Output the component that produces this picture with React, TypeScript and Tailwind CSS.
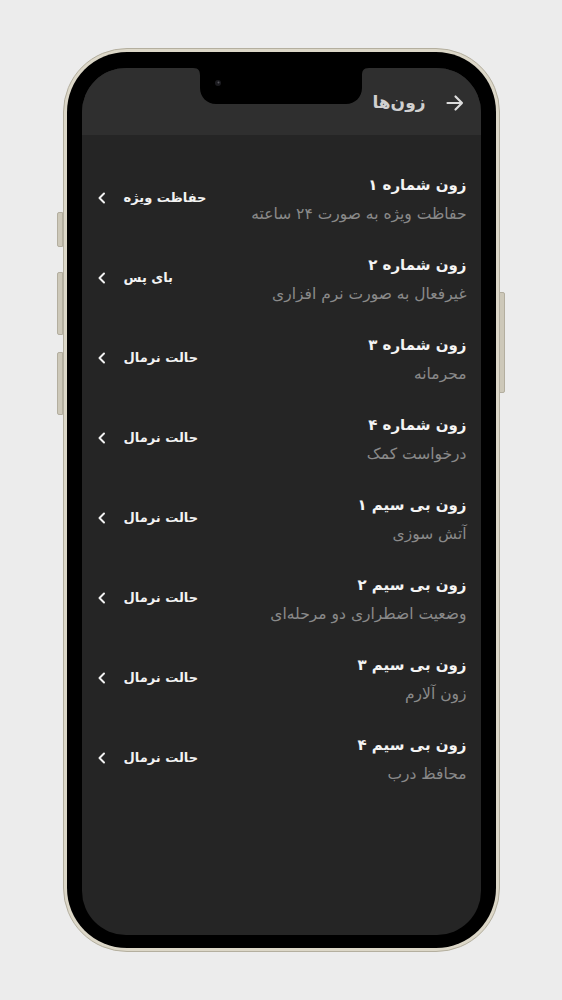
import React from 'react';

const zones = [
  { title: 'زون شماره ۱', sub: 'حفاظت ویژه به صورت ۲۴ ساعته', status: 'حفاظت ویژه' },
  { title: 'زون شماره ۲', sub: 'غیرفعال به صورت نرم افزاری', status: 'بای پس' },
  { title: 'زون شماره ۳', sub: 'محرمانه', status: 'حالت نرمال' },
  { title: 'زون شماره ۴', sub: 'درخواست کمک', status: 'حالت نرمال' },
  { title: 'زون بی سیم ۱', sub: 'آتش سوزی', status: 'حالت نرمال' },
  { title: 'زون بی سیم ۲', sub: 'وضعیت اضطراری دو مرحله‌ای', status: 'حالت نرمال' },
  { title: 'زون بی سیم ۳', sub: 'زون آلارم', status: 'حالت نرمال' },
  { title: 'زون بی سیم ۴', sub: 'محافظ درب', status: 'حالت نرمال' },
];

function Chevron() {
  return (
    <svg width="10" height="12" viewBox="0 0 10 12" fill="none" stroke="#f2f2f2" strokeWidth="2" strokeLinecap="round" strokeLinejoin="round">
      <path d="M7 1.5 L2.5 6 L7 10.5" />
    </svg>
  );
}

function ZoneRow({ title, sub, status }: { title: string; sub: string; status: string }) {
  return (
    <div className="h-[80px] flex items-center justify-between">
      <div className="flex flex-col pt-[6px]">
        <span className="text-[15px] leading-[28px] font-bold text-[#f4f4f4]">{title}</span>
        <span className="text-[15.5px] leading-[30px] text-[#8a8a8a]">{sub}</span>
      </div>
      <div className="flex items-center gap-[17px] pt-[1px]">
        <span className="text-[13px] font-bold text-[#f2f2f2]">{status}</span>
        <Chevron />
      </div>
    </div>
  );
}

export default function App() {
  return (
    <div className="w-full h-[1000px] bg-[#ececec] flex justify-center pt-[48px]" style={{ fontFamily: '"DejaVu Sans", sans-serif' }}>
      <div className="relative w-[437px] h-[904px]">
        {/* side buttons */}
        <div className="absolute left-[-6px] top-[164px] w-[6px] h-[35px] rounded-l-[2px] bg-[#cdc8b9] border border-[#b3ae9f]" />
        <div className="absolute left-[-6px] top-[224px] w-[6px] h-[63px] rounded-l-[2px] bg-[#cdc8b9] border border-[#b3ae9f]" />
        <div className="absolute left-[-6px] top-[304px] w-[6px] h-[63px] rounded-l-[2px] bg-[#cdc8b9] border border-[#b3ae9f]" />
        <div className="absolute right-[-5px] top-[244px] w-[6px] h-[101px] rounded-r-[2px] bg-[#cdc8b9] border border-[#b3ae9f]" />

        <div className="w-full h-full rounded-[64px] bg-[#dcd7c8] border border-[#b4af9f] p-[3px]">
          <div className="w-full h-full rounded-[60px] bg-black pt-[16px] pb-[13px] px-[15px]">
            <div dir="rtl" className="relative w-full h-full rounded-[44px] overflow-hidden bg-[#252525] flex flex-col">
              {/* notch */}
              <div className="absolute top-0 left-0 right-0 flex justify-center">
                <svg width="176" height="36" viewBox="0 0 176 36">
                  <path d="M0 0 H176 C170 0 169 3 169 8 V20 C169 29 162 36 153 36 H23 C14 36 7 29 7 20 V8 C7 3 6 0 0 0 Z" fill="#000" />
                  <circle cx="25" cy="15" r="3" fill="#1b1b1f" />
                  <circle cx="25.5" cy="14.5" r="1" fill="#55555c" />
                </svg>
              </div>

              <header className="h-[67px] shrink-0 bg-[#2f2f2f] flex items-center gap-[20px] pr-[17px] pt-[2px]">
                <svg width="18" height="18" viewBox="0 0 18 18" fill="none" stroke="#dcdcdc" strokeWidth="2.2" strokeLinecap="round" strokeLinejoin="round">
                  <path d="M1.5 9 H16 M9.5 2.5 L16 9 L9.5 15.5" />
                </svg>
                <span className="text-[17px] font-bold text-[#d0d0d0]">زون‌ها</span>
              </header>

              <main className="flex-1 flex flex-col pt-[22px] pr-[14px] pl-[15px]">
                {zones.map((z) => (
                  <ZoneRow key={z.title} {...z} />
                ))}
              </main>
            </div>
          </div>
        </div>
      </div>
    </div>
  );
}
